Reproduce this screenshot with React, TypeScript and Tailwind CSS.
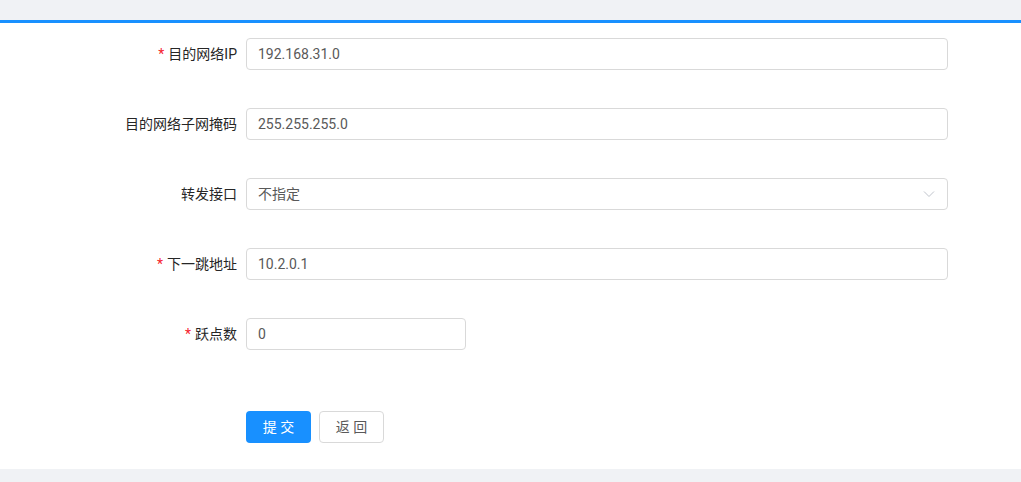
import React from "react";

const font = { fontFamily: 'Roboto, "Noto Sans CJK SC", sans-serif' };

function FormRow({
  label,
  required,
  children,
  className,
}: {
  label: string;
  required?: boolean;
  children: React.ReactNode;
  className?: string;
}) {
  return (
    <div className={`flex items-center ${className ?? ""}`}>
      <label className="w-[246px] shrink-0 pr-[9px] text-right text-[14px] leading-8 text-[#262626]">
        {required && <span className="mr-[4px] text-[#f5222d]">*</span>}
        {label}
      </label>
      {children}
    </div>
  );
}

function TextInput({ value, wide = true }: { value: string; wide?: boolean }) {
  return (
    <div
      className={`h-8 rounded-[4px] border border-[#d9d9d9] bg-white px-[11px] text-[14px] leading-[30px] text-[#595959] ${
        wide ? "w-[702px]" : "w-[220px]"
      }`}
    >
      {value}
    </div>
  );
}

function SelectBox({ value }: { value: string }) {
  return (
    <div className="flex h-8 w-[702px] items-center justify-between rounded-[4px] border border-[#d9d9d9] bg-white pl-[11px] pr-[12px] text-[14px] text-[#595959]">
      <span>{value}</span>
      <svg width="12" height="8" viewBox="0 0 12 8" fill="none">
        <path d="M1 1.5 L6 6.5 L11 1.5" stroke="#c0c4cc" strokeWidth="1" />
      </svg>
    </div>
  );
}

export default function App() {
  return (
    <div className="min-h-[482px] bg-[#f0f2f5] pt-[20px]" style={font}>
      <div className="h-[449px] border-t-[3px] border-[#1890ff] bg-white pt-[15px]">
        <FormRow label="目的网络IP" required className="mb-[38px]">
          <TextInput value="192.168.31.0" />
        </FormRow>
        <FormRow label="目的网络子网掩码" className="mb-[38px]">
          <TextInput value="255.255.255.0" />
        </FormRow>
        <FormRow label="转发接口" className="mb-[38px]">
          <SelectBox value="不指定" />
        </FormRow>
        <FormRow label="下一跳地址" required className="mb-[38px]">
          <TextInput value="10.2.0.1" />
        </FormRow>
        <FormRow label="跃点数" required>
          <TextInput value="0" wide={false} />
        </FormRow>
        <div className="mt-[61px] flex gap-2 pl-[246px]">
          <button className="h-8 w-[65px] rounded-[4px] bg-[#1890ff] text-[14px] text-white">
            提 交
          </button>
          <button className="h-8 w-[65px] rounded-[4px] border border-[#d9d9d9] bg-white text-[14px] text-[#595959]">
            返 回
          </button>
        </div>
      </div>
    </div>
  );
}
